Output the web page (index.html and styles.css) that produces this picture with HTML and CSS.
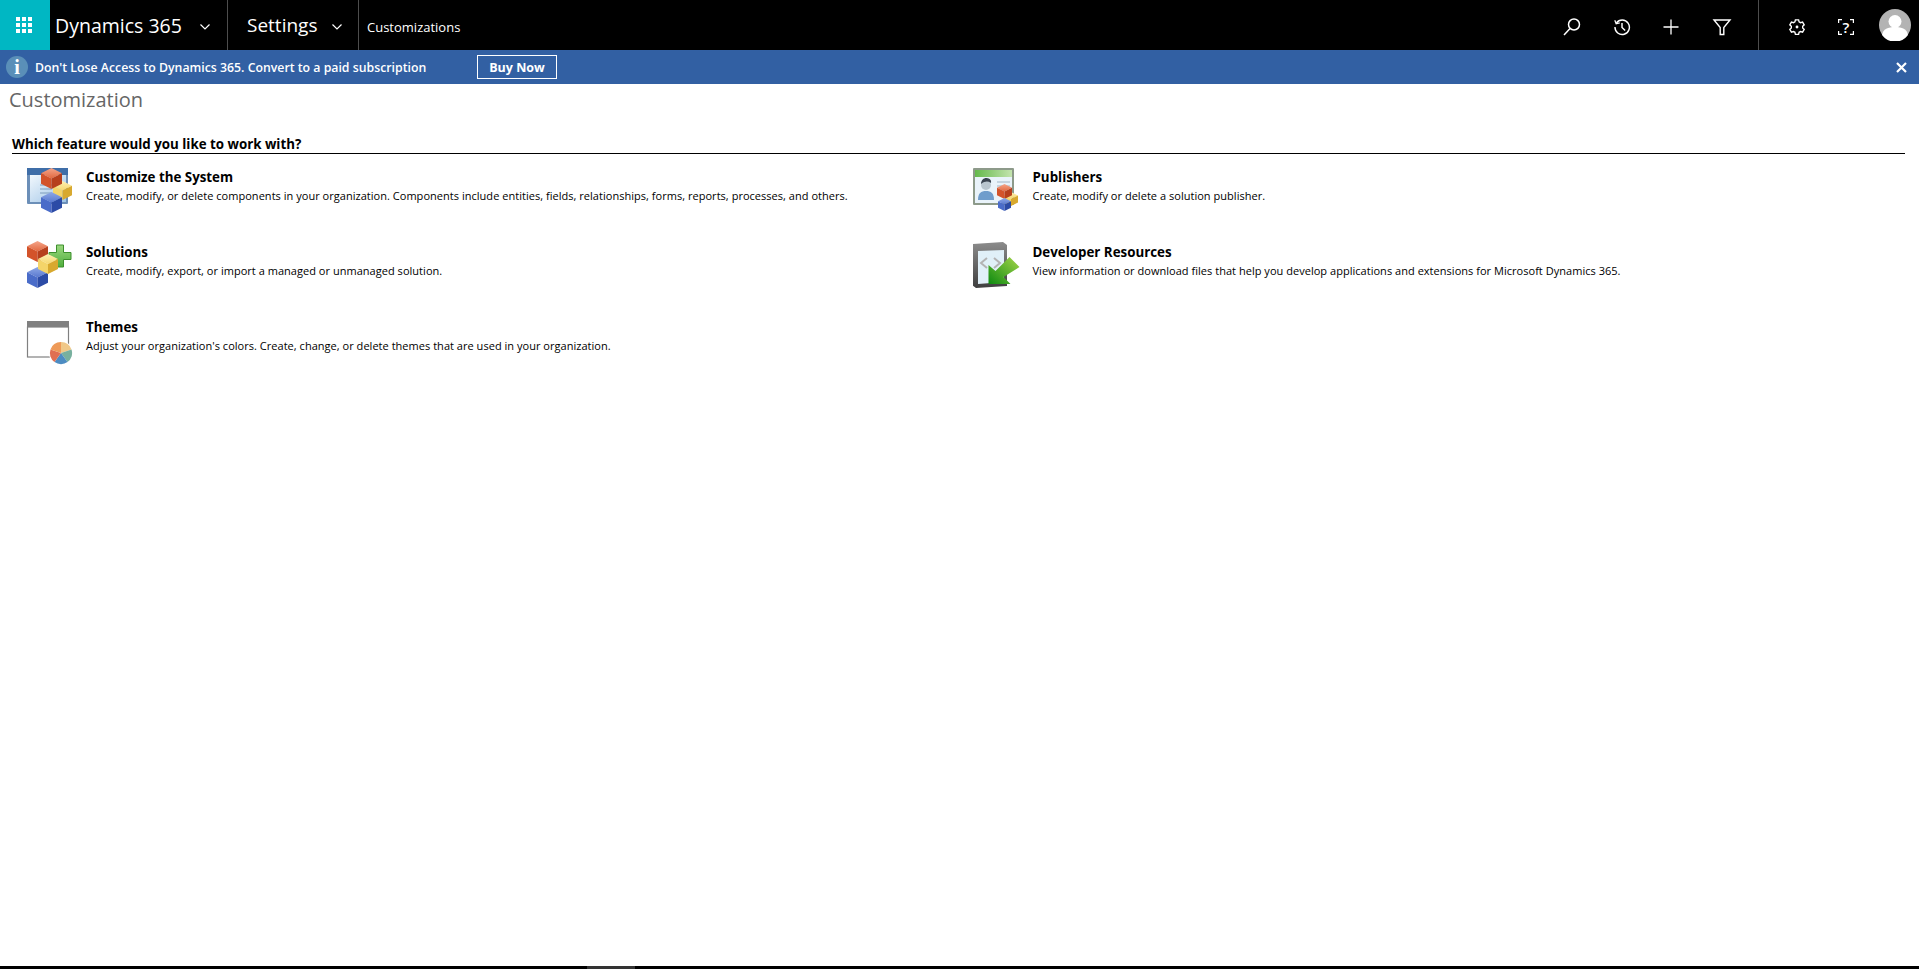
FILE: index.html
```html
<!DOCTYPE html>
<html lang="en">
<head>
  <meta charset="UTF-8" />
  <meta name="viewport" content="width=device-width, initial-scale=1.0"/>
  <title>Customization</title>
  <link rel="stylesheet" href="styles.css">
</head>
<body>
  <svg class="defs" width="0" height="0">
    <defs>
      <linearGradient id="redTop" x1="0" y1="0" x2="0" y2="1"><stop offset="0" stop-color="#f4a58a"/><stop offset="1" stop-color="#e2683f"/></linearGradient>
      <linearGradient id="yelTop" x1="0" y1="0" x2="0" y2="1"><stop offset="0" stop-color="#fdf0b4"/><stop offset="1" stop-color="#f6d76d"/></linearGradient>
      <linearGradient id="bluTop" x1="0" y1="0" x2="0" y2="1"><stop offset="0" stop-color="#8ea8e6"/><stop offset="1" stop-color="#5878cf"/></linearGradient>
      <linearGradient id="winBlue" x1="0" y1="0" x2="1" y2="1"><stop offset="0" stop-color="#f2f8fd"/><stop offset="1" stop-color="#9dc3e6"/></linearGradient>
      <linearGradient id="winGreen" x1="0" y1="0" x2="1" y2="0"><stop offset="0" stop-color="#64b94c"/><stop offset="1" stop-color="#c4e4ae"/></linearGradient>
      <linearGradient id="plus" x1="0" y1="0" x2="0" y2="1"><stop offset="0" stop-color="#9bd87f"/><stop offset="1" stop-color="#4fae3c"/></linearGradient>
      <linearGradient id="arrow" x1="1" y1="0" x2="0" y2="1"><stop offset="0" stop-color="#a6d64a"/><stop offset="1" stop-color="#0d8a10"/></linearGradient>
      <linearGradient id="tablet" x1="0" y1="0" x2="0" y2="1"><stop offset="0" stop-color="#8c8c8c"/><stop offset="1" stop-color="#3f3f3f"/></linearGradient>
      <symbol id="cubeRed" viewBox="0 0 24 24">
        <polygon points="12,0 24,6 12,12 0,6" fill="url(#redTop)"/>
        <polygon points="0,6 12,12 12,24 0,18" fill="#d3532a"/>
        <polygon points="24,6 12,12 12,24 24,18" fill="#b63f1c"/>
      </symbol>
      <symbol id="cubeYellow" viewBox="0 0 24 24">
        <polygon points="12,0 24,6 12,12 0,6" fill="url(#yelTop)"/>
        <polygon points="0,6 12,12 12,24 0,18" fill="#f4d469"/>
        <polygon points="24,6 12,12 12,24 24,18" fill="#d8a92f"/>
      </symbol>
      <symbol id="cubeBlue" viewBox="0 0 24 24">
        <polygon points="12,0 24,6 12,12 0,6" fill="url(#bluTop)"/>
        <polygon points="0,6 12,12 12,24 0,18" fill="#4a6cc9"/>
        <polygon points="24,6 12,12 12,24 24,18" fill="#2c4ba6"/>
      </symbol>
    </defs>
  </svg>

  <header class="topbar">
    <a class="tile">
      <svg width="16" height="16" viewBox="0 0 16 16" fill="#fff">
        <rect width="4" height="4"/><rect x="6" width="4" height="4"/><rect x="12" width="4" height="4"/>
        <rect y="6" width="4" height="4"/><rect x="6" y="6" width="4" height="4"/><rect x="12" y="6" width="4" height="4"/>
        <rect y="12" width="4" height="4"/><rect x="6" y="12" width="4" height="4"/><rect x="12" y="12" width="4" height="4"/>
      </svg>
    </a>
    <div class="brand">
      <span>Dynamics 365</span>
      <svg class="chev" width="10" height="6" viewBox="0 0 10 6"><path d="M.5.5 5 5 9.5.5" fill="none" stroke="#fff" stroke-width="1.2"/></svg>
    </div>
    <div class="area">
      <span>Settings</span>
      <svg class="chev" width="10" height="6" viewBox="0 0 10 6"><path d="M.5.5 5 5 9.5.5" fill="none" stroke="#fff" stroke-width="1.2"/></svg>
    </div>
    <div class="crumb">Customizations</div>
    <div class="tools">
      <button class="tool">
        <svg width="20" height="20" viewBox="0 0 20 20" fill="none" stroke="#fff" stroke-width="1.5"><circle cx="12" cy="7.5" r="5.5"/><path d="M8 11.5 2 18"/></svg>
      </button>
      <button class="tool">
        <svg width="18" height="18" viewBox="0 0 20 20" fill="none" stroke="#fff" stroke-width="1.6"><path d="M3.8 5.5A8 8 0 1 1 2.2 10"/><path d="M2 2.5 3.5 6.500 7.5 5.5" stroke-width="1.4"/><path d="M10 5.5v5l3.5 3.5"/></svg>
      </button>
      <button class="tool">
        <svg width="20" height="20" viewBox="0 0 20 20" fill="none" stroke="#fff" stroke-width="1.3"><path d="M9 2.500v15M1.500 10h15"/></svg>
      </button>
      <button class="tool">
        <svg width="20" height="20" viewBox="0 0 20 20" fill="none" stroke="#fff" stroke-width="1.4"><path d="M2 3h16L11.8 10.5V17.5H8.2V10.5Z"/></svg>
      </button>
    </div>
    <div class="tools tools-right">
      <button class="tool">
        <svg width="18" height="18" viewBox="0 0 20 20" fill="none" stroke="#fff" stroke-width="1.5"><path d="M8.2 2h3.600l.5 2.300 1.600.9 2.300-.7 1.800 3.100-1.700 1.600v1.800l1.700 1.600-1.800 3.100-2.300-.7-1.600.9-.5 2.300H8.200l-.5-2.300-1.600-.9-2.300.7-1.800-3.100 1.700-1.600V9.200L2 7.600l1.800-3.100 2.300.7 1.600-.9Z"/><circle cx="10" cy="10" r="1.6" fill="#fff" stroke="none"/></svg>
      </button>
      <button class="tool help">
        <svg class="corners" width="16" height="16" viewBox="0 0 16 16" fill="none" stroke="#fff" stroke-width="1.2"><path d="M4 .6H.6V4M12 .6h3.400V4M4 15.400H.6V12M12 15.400h3.400V12"/></svg>
        <span>?</span>
      </button>
      <div class="avatar">
        <svg width="32" height="32" viewBox="0 0 32 32"><circle cx="16" cy="16" r="16" fill="#b3b3b3"/><circle cx="16" cy="12.5" r="6.5" fill="#fff"/><path d="M3 26c1-6 6-8 13-8s12 2 13 8a16 16 0 0 1-26 0Z" fill="#fff"/></svg>
      </div>
    </div>
  </header>

  <div class="notice">
    <span class="notice-icon">i</span>
    <span class="notice-text">Don't Lose Access to Dynamics 365. Convert to a paid subscription</span>
    <button class="buy">Buy Now</button>
    <svg class="notice-close" width="11" height="11" viewBox="0 0 11 11" fill="none" stroke="#fff" stroke-width="2.2"><path d="M1 1 10 10M10 1 1 10"/></svg>
  </div>

  <main class="page">
    <h1>Customization</h1>
    <h2>Which feature would you like to work with?</h2>
    <div class="features">
      <div class="feature">
        <div class="feature-icon">
          <svg width="48" height="48" viewBox="0 0 48 48">
            <rect x="1" y="2" width="41" height="36" rx="1" fill="#6c8fb8"/>
            <rect x="1" y="2" width="41" height="7" fill="#3f6ea8"/>
            <rect x="4" y="9" width="36" height="27" fill="url(#winBlue)"/>
            <path d="M14 19h12M14 23h12M14 27h12" stroke="#7d9cbc"/>
            <use href="#cubeYellow" x="27" y="15" width="19" height="19"/>
            <use href="#cubeRed" x="15" y="2" width="21" height="21"/>
            <use href="#cubeBlue" x="15" y="26" width="21" height="21"/>
          </svg>
        </div>
        <div class="feature-text">
          <h3>Customize the System</h3>
          <p>Create, modify, or delete components in your organization. Components include entities, fields, relationships, forms, reports, processes, and others.</p>
        </div>
      </div>
      <div class="feature">
        <div class="feature-icon">
          <svg width="48" height="48" viewBox="0 0 48 48">
            <rect x="0" y="2" width="41" height="37" rx="1" fill="#8d9a8a"/>
            <rect x="2" y="4" width="37" height="7" fill="url(#winGreen)"/>
            <rect x="2" y="11" width="37" height="26" fill="#e9f3fa"/>
            <path d="M24 16h13M24 20h13M24 24h6" stroke="#9fb6c8"/>
            <path d="M5 34c0-7 3-9 8-9s8 2 8 9Z" fill="#6f9dcc"/>
            <circle cx="13" cy="19" r="5" fill="#b9c6cf"/>
            <path d="M8 18c0-4 3-6 5-6s6 1 5 5c-3-2-6-2-10 1Z" fill="#3a4450"/>
            <use href="#cubeYellow" x="31" y="26" width="14" height="14"/>
            <use href="#cubeRed" x="24" y="18" width="15" height="15"/>
            <use href="#cubeBlue" x="25" y="32" width="13" height="13"/>
          </svg>
        </div>
        <div class="feature-text">
          <h3>Publishers</h3>
          <p>Create, modify or delete a solution publisher.</p>
        </div>
      </div>
      <div class="feature">
        <div class="feature-icon">
          <svg width="48" height="48" viewBox="0 0 48 48">
            <path d="M30.5 4h7v7.5H45v7h-7.5V26h-7v-7.5H23v-7h7.5Z" fill="url(#plus)" stroke="#3d8f2d"/>
            <use href="#cubeRed" x="1" y="0" width="21" height="21"/>
            <use href="#cubeBlue" x="1" y="26" width="21" height="21"/>
            <use href="#cubeYellow" x="12" y="13" width="20" height="20"/>
          </svg>
        </div>
        <div class="feature-text">
          <h3>Solutions</h3>
          <p>Create, modify, export, or import a managed or unmanaged solution.</p>
        </div>
      </div>
      <div class="feature">
        <div class="feature-icon">
          <svg width="48" height="48" viewBox="0 0 48 48">
            <path d="M-1 3 30 1 34 4V45L3 47-1 44Z" fill="url(#tablet)"/>
            <path d="M5 10 31 9V41L5 43Z" fill="#e0f0f8"/>
            <path d="M14 17 8 22 14 27M21 17 27 22 21 27" fill="none" stroke="#b3b3b3" stroke-width="2"/>
            <path d="M36.5 16 46.5 26 30.5 36 37.5 43H15.5V24L22.5 30Z" fill="url(#arrow)"/>
          </svg>
        </div>
        <div class="feature-text">
          <h3>Developer Resources</h3>
          <p>View information or download files that help you develop applications and extensions for Microsoft Dynamics 365.</p>
        </div>
      </div>
      <div class="feature">
        <div class="feature-icon">
          <svg width="48" height="50" viewBox="0 0 48 50">
            <rect x="1" y="5" width="42" height="7" fill="#808080"/>
            <rect x="1.5" y="11" width="41" height="30" fill="#fff" stroke="#808080" stroke-width="1.2"/>
            <circle cx="35" cy="37" r="12" fill="#fff"/>
            <path d="M35 37V26a11 11 0 0 1 10.5 7.5Z" fill="#f0c888"/>
            <path d="M35 37l10.5-3.500a11 11 0 0 1-4 12.500Z" fill="#78b09e"/>
            <path d="M35 37l6.500 9a11 11 0 0 1-13 0Z" fill="#4d8cc2"/>
            <path d="M35 37l-6.500 9a11 11 0 0 1-4-12.500Z" fill="#e06f52"/>
            <path d="M35 37l-10.500-3.500A11 11 0 0 1 35 26Z" fill="#ee9a58"/>
          </svg>
        </div>
        <div class="feature-text">
          <h3>Themes</h3>
          <p>Adjust your organization's colors. Create, change, or delete themes that are used in your organization.</p>
        </div>
      </div>
    </div>
  </main>

  <div class="scrollbar"><div class="scrollbar-thumb"></div></div>
</body>
</html>
```

FILE: styles.css
```css
* { box-sizing: border-box; }
html, body { height: 100%; }
body { margin: 0; display: flex; flex-direction: column; overflow: hidden; background: #fff; color: #000; font-family: "Open Sans", "Noto Sans", Arial, sans-serif; }
button { font-family: inherit; cursor: pointer; }
.defs { position: absolute; }

.topbar { height: 50px; flex: none; display: flex; align-items: stretch; background: #000; color: #fff; }
.tile { width: 50px; flex: none; display: flex; align-items: center; justify-content: center; padding-right: 2px; background: #00b7c3; }
.brand { width: 178px; flex: none; display: flex; align-items: center; padding-left: 5px; border-right: 1px solid #4d4d4d; font-size: 19.5px; }
.area { width: 131px; flex: none; display: flex; align-items: center; padding-left: 19px; border-right: 1px solid #4d4d4d; font-size: 19px; }
.chev { margin-left: 18px; margin-top: 3px; }
.area .chev { margin-left: 15px; }
.crumb { display: flex; align-items: center; padding-left: 8px; padding-top: 4px; font-size: 13px; }
.tools { margin-left: auto; display: flex; align-items: center; padding-right: 11px; }
.tools-right { margin-left: 0; width: 161px; padding: 0 8px 0 13px; height: 50px; border-left: 1px solid #4d4d4d; }
.tool { width: 50px; height: 50px; flex: none; display: flex; align-items: center; justify-content: center; padding: 3px 0 0; background: none; border: 0; color: #fff; }
.help { position: relative; margin-left: -1px; font-size: 15px; font-weight: 600; }
.corners { position: absolute; left: 17px; top: 19px; }
.avatar { width: 32px; height: 32px; margin-left: 8px; flex: none; }

.notice { height: 34px; flex: none; display: flex; align-items: center; padding-left: 6px; background: #3260a3; color: #fff; }
.notice-icon { width: 22px; height: 22px; flex: none; border-radius: 50%; background: #5a8fb8; font-family: "Liberation Serif", serif; font-size: 20px; font-weight: 700; line-height: 22px; text-align: center; }
.notice-text { width: 442px; margin-left: 7px; font-size: 12.3px; font-weight: 600; }
.buy { width: 80px; height: 24px; padding: 0; background: none; border: 1px solid #fff; color: #fff; font-size: 12.5px; font-weight: 700; }
.notice-close { margin-left: auto; margin-right: 12px; }

.page { flex: 1; min-height: 0; padding: 0 14px 0 12px; }
h1 { margin: 2px 0 0 -3px; font-size: 20px; font-weight: 400; line-height: 28px; color: #666; }
h2 { margin: 21px 0 0; height: 19px; border-bottom: 1px solid #000; font-size: 13.33px; font-weight: 700; line-height: 18px; }
.features { display: grid; grid-template-columns: 1fr 1fr; }
.feature { height: 75px; padding: 12px 0 0 14px; display: flex; gap: 12px; }
.feature-icon { width: 48px; flex: none; }
.feature-text { padding-top: 2px; }
h3 { margin: 0; font-size: 13.33px; font-weight: 700; line-height: 18px; }
p { margin: 1px 0 0; font-size: 11px; line-height: 18px; letter-spacing: .03px; }

.scrollbar { height: 3px; flex: none; background: #000; }
.scrollbar-thumb { width: 48px; height: 3px; margin-left: 587px; background: #333; }
```
